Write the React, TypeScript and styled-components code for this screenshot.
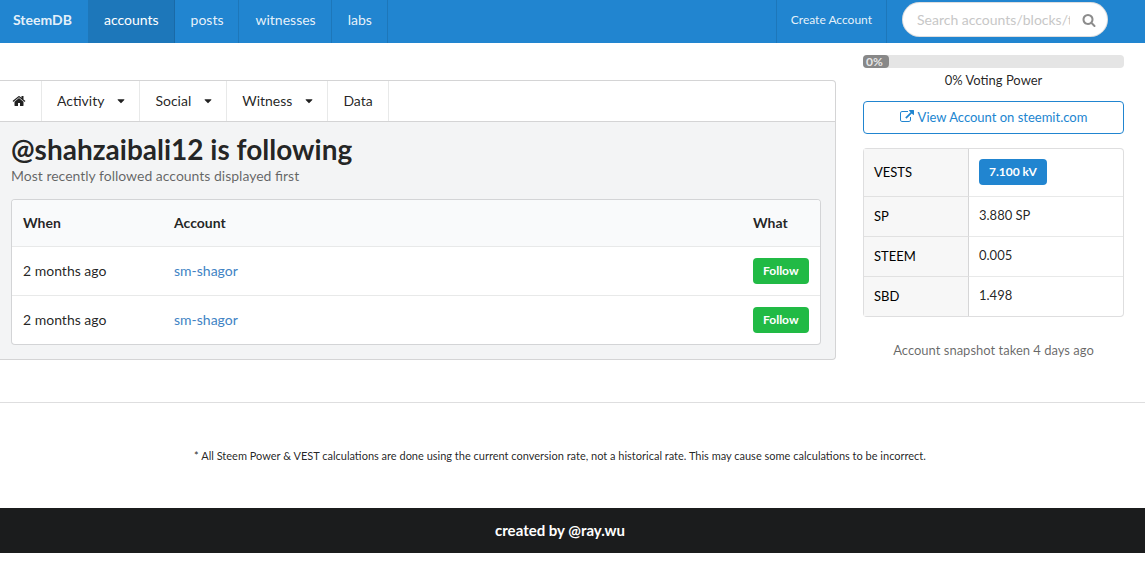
import React from 'react';
import styled, { createGlobalStyle } from 'styled-components';

const GlobalStyle = createGlobalStyle`
  *, *::before, *::after { box-sizing: border-box; }
  body {
    margin: 0;
    background: #fff;
    color: rgba(0, 0, 0, 0.87);
    font: 14px/20px Lato, "Liberation Sans", sans-serif;
  }
  a { color: #4183c4; text-decoration: none; }
  button, input { font-family: inherit; }
`;

const TopBar = styled.header`
  display: flex;
  height: 43px;
  background: #2185d0;
`;

const TopLink = styled.a<{ $active?: boolean; $brand?: boolean; $small?: boolean }>`
  display: flex;
  align-items: center;
  padding: 0 ${(p) => (p.$small ? 14 : 15)}px 4px ${(p) => (p.$brand ? 13 : p.$small ? 14 : 16)}px;
  border-right: 1px solid ${(p) => (p.$brand ? 'transparent' : 'rgba(0, 0, 0, 0.1)')};
  border-left: ${(p) => (p.$small ? '1px solid rgba(0, 0, 0, 0.1)' : '0')};
  background: ${(p) => (p.$active ? 'rgba(0, 0, 0, 0.1)' : 'transparent')};
  color: ${(p) => (p.$active ? '#fff' : 'rgba(255, 255, 255, 0.9)')};
  font-size: ${(p) => (p.$small ? 12 : 14)}px;
  font-weight: ${(p) => (p.$brand ? 700 : 400)};
`;

const TopRight = styled.div`
  display: flex;
  margin-left: auto;
  padding-right: 37px;
`;

const Search = styled.form`
  display: flex;
  align-items: center;
  width: 206px;
  height: 35px;
  margin: 2px 0 0 15px;
  padding: 0 11px 0 14px;
  border: 1px solid rgba(34, 36, 38, 0.15);
  border-radius: 18px;
  background: #fff;

  input {
    flex: 1;
    min-width: 0;
    margin-right: 12px;
    padding: 0;
    border: 0;
    outline: 0;
    background: none;
    font-size: 14px;
  }
  input::placeholder { color: #c7c7c7; }
  button {
    display: flex;
    padding: 0;
    border: 0;
    background: none;
    color: #8c8c8c;
  }
`;

const Columns = styled.main`
  display: flex;
  align-items: flex-start;
  gap: 27px;
  padding: 12px 21px 42px 0;
`;

const Content = styled.div`
  flex: 1;
  min-width: 0;
  margin-top: 25px;
`;

const Tabs = styled.nav`
  display: flex;
  height: 42px;
  border: 1px solid #d4d4d5;
  border-left: 0;
  border-radius: 0 4px 0 0;
`;

const Tab = styled.a<{ $icon?: boolean }>`
  display: flex;
  align-items: center;
  gap: 11px;
  padding: 0 ${(p) => (p.$icon ? 15 : 12)}px 0 ${(p) => (p.$icon ? 12 : 15)}px;
  border-right: 1px solid rgba(34, 36, 38, 0.1);
  color: rgba(0, 0, 0, 0.87);

  &:last-child { padding-right: 15px; }
`;

const Panel = styled.section`
  padding: 11px 14px 14px 11px;
  border: 1px solid #d4d4d5;
  border-width: 0 1px 1px 0;
  border-radius: 0 0 4px 0;
  background: #f3f4f5;
`;

const Title = styled.h1`
  margin: 0 0 1px;
  font-size: 28px;
  font-weight: 700;
  line-height: 32px;
`;

const Subtitle = styled.p`
  margin: 0 0 13px;
  color: rgba(0, 0, 0, 0.6);
`;

const Table = styled.table`
  width: 100%;
  border: 1px solid rgba(34, 36, 38, 0.15);
  border-radius: 4px;
  border-spacing: 0;
  background: #fff;
  background-clip: padding-box;
  text-align: left;
`;

const FollowTable = styled(Table)`
  th, td { padding: 11px; }
  th {
    height: 46px;
    background: #f9fafb;
    font-weight: 700;
  }
  td {
    height: 49px;
    border-top: 1px solid rgba(34, 36, 38, 0.1);
  }
  th:first-child { width: 151px; border-top-left-radius: 3px; }
  th:last-child { width: 78px; border-top-right-radius: 3px; }
`;

const Pill = styled.button<{ $color: string }>`
  display: block;
  height: 26px;
  padding: 0 10px;
  border: 0;
  border-radius: 4px;
  background: ${(p) => p.$color};
  color: #fff;
  font-size: 12px;
  font-weight: 700;
  line-height: 26px;
`;

const Sidebar = styled.aside`
  flex: 0 0 261px;
`;

const Progress = styled.div`
  height: 13px;
  border-radius: 4px;
  background: #e5e5e5;
`;

const ProgressBar = styled.div`
  width: 26px;
  height: 13px;
  padding-left: 3px;
  border-radius: 4px;
  background: #888;
  color: rgba(255, 255, 255, 0.8);
  font-size: 12px;
  font-weight: 700;
  line-height: 14px;
`;

const ProgressLabel = styled.p`
  margin: 2px 0 11px;
  font-size: 13px;
  text-align: center;
`;

const OutlineLink = styled.a`
  display: flex;
  align-items: center;
  justify-content: center;
  gap: 4px;
  height: 33px;
  margin-bottom: 14px;
  padding-bottom: 2px;
  border: 1px solid #2185d0;
  border-radius: 4px;
  color: #2185d0;
  font-size: 13px;
`;

const StatTable = styled(Table)`
  font-size: 13px;

  th, td { height: 40px; padding: 0 10px 2px; }
  th {
    width: 105px;
    border-right: 1px solid rgba(34, 36, 38, 0.15);
    background: #f7f7f7;
    color: #000;
    font-weight: 400;
  }
  td { padding-bottom: 4px; }
  tr:first-child > * { height: 47px; }
  tr:first-child > td { padding-bottom: 1px; }
  tr + tr > * { border-top: 1px solid rgba(34, 36, 38, 0.1); }
`;

const Snapshot = styled.p`
  margin: 23px 0 0;
  color: rgba(0, 0, 0, 0.6);
  font-size: 13px;
  text-align: center;
`;

const Note = styled.p`
  margin: 0;
  padding: 43px 41px 42px 16px;
  border-top: 1px solid rgba(34, 36, 38, 0.15);
  font-size: 11px;
  text-align: center;
`;

const Footer = styled.footer`
  padding: 12px 41px 13px 16px;
  background: #1b1c1d;
  color: #fff;
  font-size: 15px;
  font-weight: 700;
  text-align: center;

  a { color: inherit; }
`;

const paths = {
  home: 'M1472 992v480q0 26-19 45t-45 19h-384v-384h-256v384h-384q-26 0-45-19t-19-45v-480q0-1 .5-3t.5-3l575-474 575 474q1 2 1 6zm223-69l-62 74q-8 9-21 11h-3q-13 0-21-7l-692-577-692 577q-12 8-24 7-13-2-21-11l-62-74q-8-10-7-23.5t11-21.5l719-599q32-26 76-26t76 26l244 204v-195q0-14 9-23t23-9h192q14 0 23 9t9 23v408l219 182q10 8 11 21.5t-7 23.5z',
  search: 'M1216 832q0-185-131.5-316.5t-316.5-131.5-316.5 131.5-131.5 316.5 131.5 316.5 316.5 131.5 316.5-131.5 131.5-316.5zm512 832q0 52-38 90t-90 38q-54 0-90-38l-343-342q-179 124-399 124-143 0-273.5-55.5t-225-150-150-225-55.5-273.5 55.5-273.5 150-225 225-150 273.5-55.5 273.5 55.5 225 150 150 225 55.5 273.5q0 220-124 399l343 343q37 37 37 90z',
  external: 'M1408 928v320q0 119-84.5 203.5t-203.5 84.5h-832q-119 0-203.5-84.5t-84.5-203.5v-832q0-119 84.5-203.5t203.5-84.5h704q14 0 23 9t9 23v64q0 14-9 23t-23 9h-704q-66 0-113 47t-47 113v832q0 66 47 113t113 47h832q66 0 113-47t47-113v-320q0-14 9-23t23-9h64q14 0 23 9t9 23zm384-864v512q0 26-19 45t-45 19-45-19l-176-176-652 652q-10 10-23 10t-23-10l-114-114q-10-10-10-23t10-23l652-652-176-176q-19-19-19-45t19-45 45-19h512q26 0 45 19t19 45z',
  caret: 'M1408 704q0 26-19 45l-448 448q-19 19-45 19t-45-19l-448-448q-19-19-19-45t19-45 45-19h896q26 0 45 19t19 45z',
};

const Icon = ({ name, size = 14 }: { name: keyof typeof paths; size?: number }) => (
  <svg width={size} height={size} viewBox="0 0 1792 1792" fill="currentColor" aria-hidden="true">
    <path d={paths[name]} />
  </svg>
);

const menus = ['Activity', 'Social', 'Witness'];

const follows = [
  { when: '2 months ago', account: 'sm-shagor' },
  { when: '2 months ago', account: 'sm-shagor' },
];

export default function App() {
  return (
    <>
      <GlobalStyle />
      <TopBar>
        <TopLink href="#" $brand>SteemDB</TopLink>
        <TopLink href="#" $active>accounts</TopLink>
        <TopLink href="#">posts</TopLink>
        <TopLink href="#">witnesses</TopLink>
        <TopLink href="#">labs</TopLink>
        <TopRight>
          <TopLink href="#" $small>Create Account</TopLink>
          <Search role="search">
            <input type="text" aria-label="Search" placeholder="Search accounts/blocks/transactions" />
            <button type="button" aria-label="Search"><Icon name="search" /></button>
          </Search>
        </TopRight>
      </TopBar>

      <Columns>
        <Content>
          <Tabs>
            <Tab href="#" $icon aria-label="Home"><Icon name="home" /></Tab>
            {menus.map((label) => (
              <Tab href="#" key={label}>{label}<Icon name="caret" size={12} /></Tab>
            ))}
            <Tab href="#">Data</Tab>
          </Tabs>
          <Panel>
            <Title>@shahzaibali12 is following</Title>
            <Subtitle>Most recently followed accounts displayed first</Subtitle>
            <FollowTable>
              <thead>
                <tr><th>When</th><th>Account</th><th>What</th></tr>
              </thead>
              <tbody>
                {follows.map((row, i) => (
                  <tr key={i}>
                    <td>{row.when}</td>
                    <td><a href="#">{row.account}</a></td>
                    <td><Pill type="button" $color="#21ba45">Follow</Pill></td>
                  </tr>
                ))}
              </tbody>
            </FollowTable>
          </Panel>
        </Content>

        <Sidebar>
          <Progress><ProgressBar>0%</ProgressBar></Progress>
          <ProgressLabel>0% Voting Power</ProgressLabel>
          <OutlineLink href="#"><Icon name="external" />View Account on steemit.com</OutlineLink>
          <StatTable>
            <tbody>
              <tr>
                <th scope="row">VESTS</th>
                <td><Pill type="button" $color="#2185d0">7.100 kV</Pill></td>
              </tr>
              <tr><th scope="row">SP</th><td>3.880 SP</td></tr>
              <tr><th scope="row">STEEM</th><td>0.005</td></tr>
              <tr><th scope="row">SBD</th><td>1.498</td></tr>
            </tbody>
          </StatTable>
          <Snapshot>Account snapshot taken 4 days ago</Snapshot>
        </Sidebar>
      </Columns>

      <Note>
        * All Steem Power &amp; VEST calculations are done using the current conversion rate, not a
        historical rate. This may cause some calculations to be incorrect.
      </Note>
      <Footer>created by <a href="#">@ray.wu</a></Footer>
    </>
  );
}
